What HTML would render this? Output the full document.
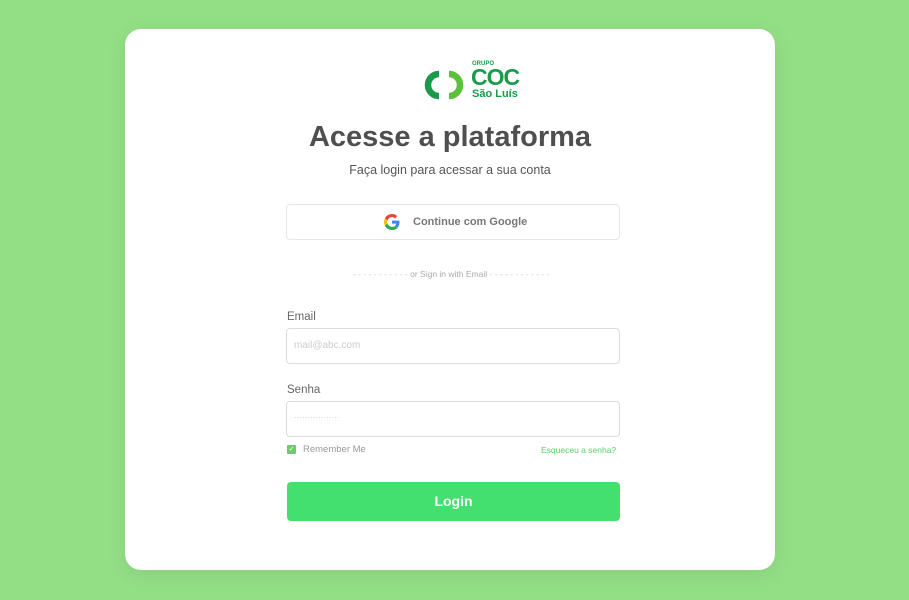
<!DOCTYPE html>
<html><head><meta charset="utf-8"><style>
*{box-sizing:border-box;margin:0;padding:0}
body{width:909px;height:600px;background:#93df86;font-family:"Liberation Sans",sans-serif;position:relative;overflow:hidden}
.card{position:absolute;left:125px;top:29px;width:650px;height:541px;background:#fff;border-radius:16px;box-shadow:0 4px 20px rgba(0,0,0,.08)}
.abs{position:absolute}
h1{position:absolute;left:0;width:100%;top:92px;text-align:center;font-size:29px;font-weight:bold;color:#4f4f4f}
.sub{top:134px;left:0;width:100%;text-align:center;font-size:12.5px;color:#555}
.box{border:1px solid #dcdcdc;border-radius:4px;background:#fff}
.lbl{font-size:11.5px;color:#666}
</style></head><body>
<div class="card">
 <svg class="abs" style="left:297px;top:38px" width="44" height="36" viewBox="0 0 44 36">
  <path d="M17 7 A11 11 0 1 0 17 29" stroke="#1a9a4a" stroke-width="6.5" fill="none"/>
  <path d="M27 29 A11 11 0 1 0 27 7" stroke="#5cc13a" stroke-width="6.5" fill="none"/>
 </svg>
 <div class="abs" style="left:347px;top:32px;font-size:6px;color:#1a9a4a;font-weight:bold">GRUPO</div>
 <div class="abs" style="left:346px;top:35px;font-size:23px;color:#1a9a4a;font-weight:bold;letter-spacing:-1px">COC</div>
 <div class="abs" style="left:347px;top:59px;font-size:11px;color:#1a9a4a;font-weight:bold">São Luís</div>
 <h1>Acesse a plataforma</h1>
 <div class="abs sub">Faça login para acessar a sua conta</div>
 <div class="abs box" style="left:161px;top:175px;width:334px;height:36px;border-color:#e6e6e6"></div>
 <svg class="abs" style="left:259px;top:185px" width="16" height="16" viewBox="0 0 48 48">
  <path fill="#EA4335" d="M24 9.5c3.5 0 6.6 1.2 9.1 3.6l6.8-6.8C35.8 2.4 30.3 0 24 0 14.6 0 6.6 5.4 2.7 13.3l7.9 6.1C12.5 13.6 17.8 9.5 24 9.5z"/>
  <path fill="#4285F4" d="M46.5 24.5c0-1.6-.1-3.1-.4-4.5H24v9h12.7c-.6 2.9-2.2 5.4-4.7 7.1l7.7 6c4.5-4.2 6.8-10.3 6.8-17.6z"/>
  <path fill="#FBBC05" d="M10.5 28.6c-.5-1.4-.8-3-.8-4.6s.3-3.200.8-4.6l-7.9-6.1C1 16.6 0 20.2 0 24s1 7.4 2.7 10.7l7.8-6.1z"/>
  <path fill="#34A853" d="M24 48c6.5 0 11.9-2.1 15.9-5.8l-7.7-6c-2.1 1.4-4.9 2.3-8.2 2.3-6.2 0-11.5-4.2-13.4-9.9l-7.9 6.1C6.6 42.6 14.6 48 24 48z"/>
 </svg>
 <div class="abs" style="left:288px;top:187px;font-size:11px;color:#777;font-weight:bold">Continue com Google</div>
 <div class="abs" style="left:228px;top:240px;font-size:8.5px;color:#aaa;white-space:nowrap"><span style="color:#ccc">- - - - - - - - - - - </span> or Sign in with Email <span style="color:#ccc">- - - - - - - - - - - -</span></div>
 <div class="abs lbl" style="left:162px;top:282px">Email</div>
 <div class="abs box" style="left:161px;top:299px;width:334px;height:36px"></div>
 <div class="abs" style="left:169px;top:311px;font-size:10px;color:#ccc">mail@abc.com</div>
 <div class="abs lbl" style="left:162px;top:355px">Senha</div>
 <div class="abs box" style="left:161px;top:372px;width:334px;height:36px"></div>
 <div class="abs" style="left:169px;top:384px;font-size:8px;color:#ccc">·················</div>
 <div class="abs" style="left:162px;top:416px;width:9px;height:9px;background:#72c770;border-radius:1px;color:#fff;font-size:7px;line-height:9px;text-align:center">✓</div>
 <div class="abs" style="left:178px;top:415px;font-size:9.5px;color:#999">Remember Me</div>
 <div class="abs" style="left:416px;top:416px;font-size:8.5px;color:#5ccf6a">Esqueceu a senha?</div>
 <div class="abs" style="left:162px;top:453px;width:333px;height:39px;background:#43df6f;border-radius:4px;color:#fff;font-weight:bold;font-size:14px;text-align:center;line-height:39px">Login</div>
</div>
</body></html>
